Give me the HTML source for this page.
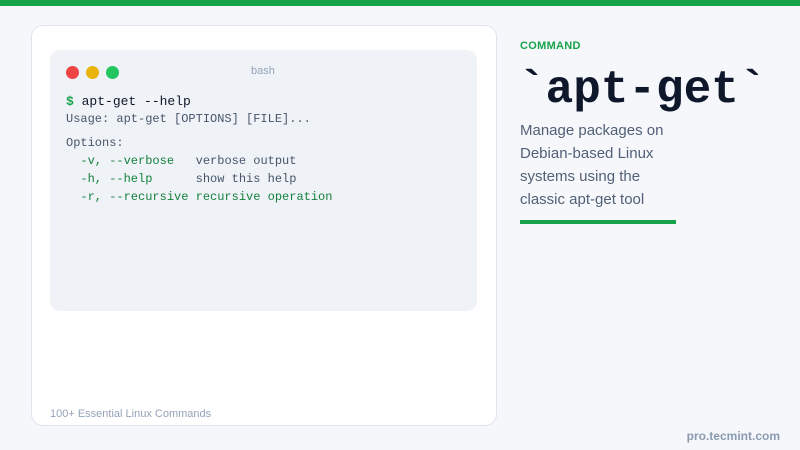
<!DOCTYPE html><html><head><style>
body{margin:0;width:800px;height:450px;background:#f5f7fb;position:relative;overflow:hidden;font-family:"Liberation Sans",sans-serif}
.top{position:absolute;left:0;top:0;width:800px;height:6px;background:#16a34a}
.card{position:absolute;left:31px;top:25px;width:466px;height:401px;background:#fff;border:1px solid #dfe5ee;border-radius:12px;box-sizing:border-box}
.term{position:absolute;left:50px;top:50px;width:427px;height:261px;background:#eff3f8;border-radius:10px}
.dot{position:absolute;top:66px;width:13px;height:13px;border-radius:50%}
.m{position:absolute;font-family:"Liberation Mono",monospace;white-space:pre;left:66px}
.g{color:#15803d}
</style></head><body>
<div class="top"></div>
<div class="card"></div>
<div class="term"></div>
<div class="dot" style="left:66px;background:#ef4444"></div>
<div class="dot" style="left:86px;background:#eab308"></div>
<div class="dot" style="left:106px;background:#22c55e"></div>
<div class="m" style="left:251px;top:65px;font-size:11px;color:#94a3b8;font-family:'Liberation Sans',sans-serif">bash</div>
<div class="m" style="top:94px;font-size:13px;color:#0f172a"><b style="color:#16a34a">$</b> apt-get --help</div>
<div class="m" style="top:112px;font-size:12px;color:#475569">Usage: apt-get [OPTIONS] [FILE]...</div>
<div class="m" style="top:136px;font-size:12px;color:#475569">Options:</div>
<div class="m" style="top:154px;font-size:12px;color:#475569"><span class="g">  -v, --verbose</span>   verbose output</div>
<div class="m" style="top:172px;font-size:12px;color:#475569"><span class="g">  -h, --help</span>      show this help</div>
<div class="m g" style="top:190px;font-size:12px">  -r, --recursive recursive operation</div>
<div style="position:absolute;left:50px;top:408px;font-size:11px;color:#94a3b8">100+ Essential Linux Commands</div>
<div style="position:absolute;left:520px;top:40px;font-size:11px;font-weight:bold;color:#16a34a;letter-spacing:.3px">COMMAND</div>
<div style="position:absolute;left:518px;top:60px;font-family:'Liberation Mono',monospace;font-size:46px;font-weight:bold;color:#0f172a;line-height:60px">`apt-get`</div>
<div style="position:absolute;left:520px;top:119px;width:160px;font-size:15px;line-height:23px;color:#526077">Manage packages on Debian-based Linux systems using the classic apt-get tool</div>
<div style="position:absolute;left:520px;top:220px;width:156px;height:4px;background:#16a34a"></div>
<div style="position:absolute;right:20px;top:429px;font-size:12px;color:#8a9ab0;font-weight:bold">pro.tecmint.com</div>
</body></html>
